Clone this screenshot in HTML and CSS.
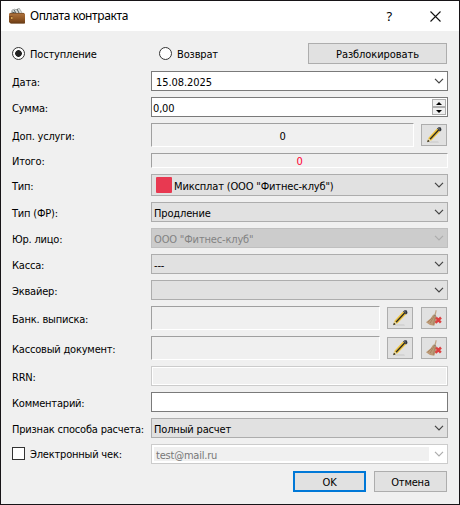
FILE: index.html
```html
<!DOCTYPE html>
<html lang="ru">
<head>
<meta charset="utf-8">
<title>Оплата контракта</title>
<link rel="stylesheet" href="styles.css">
</head>
<body>
<svg class="defs" width="0" height="0" aria-hidden="true">
  <symbol id="chevron" viewBox="0 0 10 6"><path d="M1 .8 5 4.8 9 .8" fill="none" stroke="currentColor" stroke-width="1.2"/></symbol>
  <symbol id="pencil" viewBox="0 0 16 16">
    <path d="M3 15.6h10l-1-1H5z" fill="#c8c8c8"/>
    <path d="M1.3 15 2.3 11 11 1.6 14.2 4.2 5.3 13.6z" fill="#f0c43c"/>
    <path d="M4 12.2 12.6 3" stroke="#292923" stroke-width="1.3"/>
    <path d="m2.3 11 3 2.6-2 .7-1.3-1.2z" fill="#e8d8a2"/>
    <path d="m1.2 15.2.7-2.4 1.8 1.5z" fill="#222"/>
    <path d="m11 1.6 1.5-1.3h2L15.4 2v1.3L14 4.5z" fill="#30343a"/>
    <path d="m12.5 1.3 1 .8" stroke="#b9bdc4" stroke-width="1"/>
  </symbol>
  <symbol id="broom" viewBox="0 0 16 16">
    <path d="m9.7 0 1 .5-1 5-1.4-.5z" fill="#c1a483"/>
    <path d="M7.3 4.5 10.2 6v5l-2 4.7L4 15l-4-2.8 4.5-3.8z" fill="#bd9a76"/>
    <path d="m8.2 6-4 7m5-6-2 8M6 8l-4 4" stroke="#9c7c5c" stroke-width=".7"/>
    <path d="m8 5 2.2 1.2" stroke="#7f786c" stroke-width="1"/>
    <path d="m10 7.5 4.8 5.2M15 7.5 9.5 12.8" stroke="#dc4040" stroke-width="2.5"/>
  </symbol>
</svg>
<main class="window">
  <header class="titlebar">
    <svg class="wallet" viewBox="0 0 16 16">
      <path d="m2 6 1-4 3-1 1 1 3-2 2 3 2 4z" fill="#d9dddc" stroke="#8a8f8d" stroke-width=".6"/>
      <path d="m5 2 2 3m1-4 2 4M3 4l3 1" stroke="#414746" stroke-width=".9"/>
      <defs><linearGradient id="leather" x2="0" y2="1"><stop stop-color="#b07540"/><stop offset=".5" stop-color="#935a28"/><stop offset="1" stop-color="#6d3c14"/></linearGradient></defs>
      <path d="M.6 5H15l1 1v9.4H1.5L0 14V6z" fill="url(#leather)"/>
      <path d="M1 5.4h14M2 15h13" stroke="#65401f" stroke-width=".6"/>
      <path d="M0 8h3l1 1v1.8L3 12H0z" fill="#7d4a20"/>
      <circle cx="2.8" cy="10" r=".9" fill="#e3b45b"/>
    </svg>
    <h1 class="title">Оплата контракта</h1>
    <span class="help">?</span>
    <svg class="close" viewBox="0 0 11 11"><path d="m.5.5 10 10m0-10-10 10" stroke="#111" stroke-width="1.1"/></svg>
  </header>
  <section class="mode">
    <label class="choice income"><i class="radio on"></i><span>Поступление</span></label>
    <label class="choice refund"><i class="radio"></i><span>Возврат</span></label>
    <button class="button unlock"><span>Разблокировать</span></button>
  </section>
  <section class="form">
    <div class="row"><span class="label">Дата:</span><div class="field edit date"><span>15.08.2025</span><svg class="arrow"><use href="#chevron"/></svg></div></div>
    <div class="row"><span class="label">Сумма:</span><div class="field edit"><span>0,00</span><div class="spin"><i class="up"></i><i class="down"></i></div></div></div>
    <div class="row tall"><span class="label">Доп. услуги:</span><div class="field sunken center"><span>0</span></div><button class="button tool"><svg><use href="#pencil"/></svg></button></div>
    <div class="row total"><span class="label">Итого:</span><div class="field sunken center red"><span>0</span></div></div>
    <div class="row type"><span class="label">Тип:</span><div class="field combo swatched"><i class="swatch"></i><span>Миксплат (ООО "Фитнес-клуб")</span><svg class="arrow"><use href="#chevron"/></svg></div></div>
    <div class="row"><span class="label">Тип (ФР):</span><div class="field combo"><span>Продление</span><svg class="arrow"><use href="#chevron"/></svg></div></div>
    <div class="row"><span class="label">Юр. лицо:</span><div class="field combo disabled"><span>ООО "Фитнес-клуб"</span><svg class="arrow"><use href="#chevron"/></svg></div></div>
    <div class="row"><span class="label">Касса:</span><div class="field combo"><span class="dashes">---</span><svg class="arrow"><use href="#chevron"/></svg></div></div>
    <div class="row"><span class="label">Эквайер:</span><div class="field combo"><svg class="arrow"><use href="#chevron"/></svg></div></div>
    <div class="row tall"><span class="label">Банк. выписка:</span><div class="field sunken"></div><button class="button tool"><svg><use href="#pencil"/></svg></button><button class="button tool"><svg><use href="#broom"/></svg></button></div>
    <div class="row tall"><span class="label">Кассовый документ:</span><div class="field sunken"></div><button class="button tool"><svg><use href="#pencil"/></svg></button><button class="button tool"><svg><use href="#broom"/></svg></button></div>
    <div class="row"><span class="label">RRN:</span><div class="field readonly"></div></div>
    <div class="row"><span class="label">Комментарий:</span><div class="field edit"></div></div>
    <div class="row"><span class="label">Признак способа расчета:</span><div class="field combo"><span>Полный расчет</span><svg class="arrow"><use href="#chevron"/></svg></div></div>
    <div class="row"><label class="label choice receipt"><i class="check"></i><span>Электронный чек:</span></label><div class="field mail"><span class="address">test@mail.ru</span><svg class="arrow"><use href="#chevron"/></svg></div></div>
  </section>
  <footer class="actions">
    <button class="button primary"><span>OK</span></button>
    <button class="button"><span>Отмена</span></button>
  </footer>
</main>
</body>
</html>
```
FILE: styles.css
```css
* { box-sizing: border-box; }
body { margin: 0; font: 11px/14px "DejaVu Sans Condensed", "DejaVu Sans", sans-serif; letter-spacing: -.16px; color: #000; }
.defs { position: absolute; }
.window { width: 460px; height: 505px; border: 1px solid #171417; background: #f0f0f0; overflow: hidden; }
.titlebar { height: 30px; display: flex; align-items: center; background: #fff; padding: 0 18px 0 8px; }
.wallet { width: 16px; height: 16px; margin-right: 5px; }
.title { font: 12px/16px "Noto Sans", sans-serif; letter-spacing: -.39px; margin: 0; flex: 1; white-space: nowrap; }
.help { font: 13px/16px "Noto Sans", sans-serif; margin-right: 38px; }
.close { width: 11px; height: 11px; }
.mode { height: 21px; margin: 12px 12px 7px 11px; display: flex; align-items: center; }
.choice { display: flex; align-items: center; white-space: nowrap; }
.choice span, .button span { padding-top: 3px; }
.income { width: 147px; }
.refund { flex: 1; }
.radio { width: 13px; height: 13px; border: 1px solid #333; border-radius: 50%; background: #fff; margin-right: 5px; flex: none; }
.radio.on { background: radial-gradient(circle, #222 0 3px, #fff 3.7px); }
.button { width: 73px; height: 21px; border: 1px solid #adadad; background: #e1e1e1; padding: 0; font: inherit; letter-spacing: inherit; color: inherit; flex: none; display: flex; align-items: center; justify-content: center; }
.unlock { width: 139px; letter-spacing: -.08px; }
.form { display: flex; flex-direction: column; gap: 6px; margin: 0 11px; }
.row { display: flex; align-items: center; height: 20px; }
.tall { height: 24px; }
.total { height: 15px; }
.type { height: 22px; }
.label { width: 139px; flex: none; white-space: nowrap; padding-top: 4px; letter-spacing: -.2px; }
.field { flex: 1; height: 100%; min-width: 0; border: 1px solid #adadad; display: flex; align-items: center; padding-left: 2px; white-space: nowrap; }
.field > span { padding-top: 4px; }
.total .label, .total .field > span { padding-top: 3px; }
.receipt { padding-top: 0; }
.receipt span { padding-top: 2px; }
.edit { border-color: #7a7a7a; background: #fff; padding-left: 1px; }
.date { padding-left: 4px; letter-spacing: -.08px; }
.combo { background: #e1e1e1; }
.swatched { padding-left: 4px; }
.swatch { width: 16px; height: 16px; background: #e83951; border-radius: 1px; margin-right: 2px; }
.disabled { background: #ccc; border-color: #bfbfbf; color: #838383; }
.disabled .arrow, .mail .arrow { color: #adadad; }
.sunken { border-color: #a0a0a0 #fff #fff #a0a0a0; }
.center { justify-content: center; padding: 0; }
.red { color: #ff0030; }
.readonly { border-color: #ccc; box-shadow: inset 0 0 0 1px #fff; }
.arrow { width: 10px; height: 6px; margin: 0 3px 0 auto; color: #444; flex: none; }
.spin { width: 14px; height: 16px; margin: 0 1px 0 auto; display: flex; flex-direction: column; }
.spin i { height: 8px; border: 1px solid #adadad; background: #f0f0f0; display: flex; align-items: center; justify-content: center; }
.spin i::before { content: ""; border: solid transparent; border-width: 0 3px; }
.spin .up::before { border-bottom: 3px solid #000; }
.spin .down::before { border-top: 3px solid #000; }
.tool { width: 26px; height: 22px; margin: 0 1px 0 7px; }
.tool svg { width: 16px; height: 16px; }
.check { width: 13px; height: 13px; border: 1px solid #333; background: #fff; margin: 0 5px 1px 0; flex: none; }
.mail { border-color: #ccc; background: #fff; color: #777; }
.field > .address { flex: 1; height: 14px; line-height: 17px; padding: 0 0 0 2px; background: #f0f0f0; margin-right: 5px; letter-spacing: -.2px; }
.actions { display: flex; justify-content: flex-end; gap: 8px; margin: 7px 12px 0; }
.primary { border: 2px solid #0078d7; }
```
